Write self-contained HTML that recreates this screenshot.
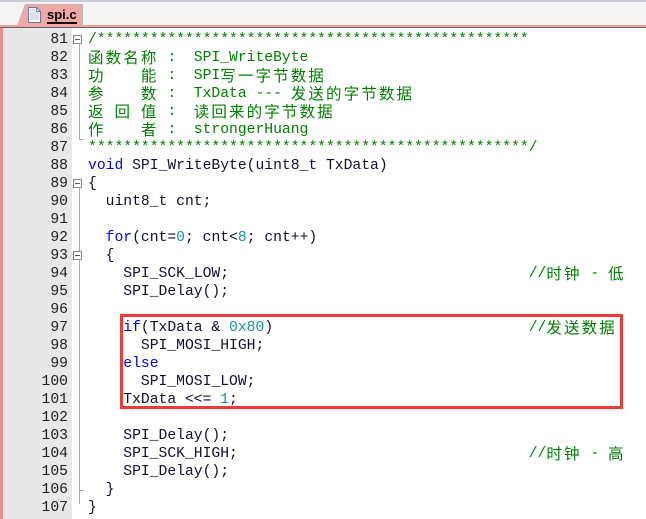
<!DOCTYPE html>
<html><head><meta charset="utf-8"><style>
body{margin:0;width:646px;height:519px;overflow:hidden;background:#fff;position:relative;font-family:"Liberation Mono","Noto Sans CJK SC",monospace;}
.top{position:absolute;left:0;top:0;width:646px;height:25px;background:#f4f4f4;border-top:2px solid #c8ccd8;box-sizing:border-box}
.pl{position:absolute;left:0;top:25px;width:646px;height:2px;background:#f0a0a0}
.dl{position:absolute;left:0;top:27px;width:646px;height:1px;background:#666}
.tab{position:absolute;left:18px;top:5px;width:64px;height:21px;background:#f3a6a6;clip-path:polygon(7px 0,100% 0,100% 100%,0 100%);}
.tabb{position:absolute;left:17px;top:4px;width:66px;height:22px;background:#b8b8b8;clip-path:polygon(8px 0,100% 0,100% 100%,0 100%);}
.tabt{position:absolute;left:47px;top:7px;font:bold 13px "Liberation Sans",sans-serif;color:#000;border-bottom:2px solid #000;line-height:15px}
.lb{position:absolute;left:0;top:28px;width:3px;height:491px;background:#e89090}
.gut{position:absolute;left:3px;top:28px;width:69px;height:491px;background:#e8e8e8}
.vl{position:absolute;left:79px;top:28px;width:1px;height:491px;background:#aaa}
.box{position:absolute;left:73px;width:9px;height:9px;border:1px solid #888;background:#fff;box-sizing:border-box}
.box:after{content:"";position:absolute;left:1px;top:3px;width:5px;height:1px;background:#555}
.nums{position:absolute;left:3px;top:31px;width:65px;text-align:right;font-size:14.7px;line-height:18px;color:#202020}
pre{position:absolute;left:88px;top:31px;margin:0;font-size:14.7px;line-height:18px;color:#101030;font-family:"Liberation Mono","Noto Sans CJK SC",monospace}
.c{color:#008000}.k{color:#0000ff}.n{color:#1a90a0}
i{font-style:normal;display:inline-block;width:17.64px;font-family:"Noto Sans CJK SC",sans-serif;font-size:15.5px;line-height:18px;vertical-align:top;margin-top:-1px;overflow:visible;white-space:nowrap}
.rb{position:absolute;left:120px;top:314px;width:503px;height:95px;border:3px solid #f03a3a;box-sizing:border-box}
</style></head><body>
<div class="top"></div><div class="pl"></div><div class="dl"></div>
<div class="tabb"></div><div class="tab"></div>
<svg style="position:absolute;left:28px;top:7px" width="13" height="16"><path d="M0.5 0.5H8.5L12.5 4.5V15.5H0.5Z" fill="#f4f4f4" stroke="#6a7a9a"/><path d="M8.5 0.5V4.5H12.5" fill="none" stroke="#6a7a9a"/><path d="M2 3h5M2 6h9M2 8h9M2 10h9M2 12h9" stroke="#c8c8d8"/></svg>
<div class="tabt">spi.c</div>
<div class="lb"></div><div class="gut"></div><div class="vl" style="top:40px;height:100px"></div><div class="vl" style="top:184px;height:320px"></div>
<div style="position:absolute;left:79px;top:139px;width:5px;height:1px;background:#aaa"></div>
<div style="position:absolute;left:79px;top:490px;width:5px;height:1px;background:#aaa"></div>
<div class="box" style="top:35px"></div><div class="box" style="top:179px"></div><div class="box" style="top:251px"></div>
<div class="nums">81<br>82<br>83<br>84<br>85<br>86<br>87<br>88<br>89<br>90<br>91<br>92<br>93<br>94<br>95<br>96<br>97<br>98<br>99<br>100<br>101<br>102<br>103<br>104<br>105<br>106<br>107</div>
<pre><span class="c">/*************************************************
<i>函</i><i>数</i><i>名</i><i>称</i> :  SPI_WriteByte
<i>功</i>    <i>能</i> :  SPI<i>写</i><i>一</i><i>字</i><i>节</i><i>数</i><i>据</i>
<i>参</i>    <i>数</i> :  TxData --- <i>发</i><i>送</i><i>的</i><i>字</i><i>节</i><i>数</i><i>据</i>
<i>返</i> <i>回</i> <i>值</i> :  <i>读</i><i>回</i><i>来</i><i>的</i><i>字</i><i>节</i><i>数</i><i>据</i>
<i>作</i>    <i>者</i> :  strongerHuang
**************************************************/</span>
<span class="k">void</span> SPI_WriteByte(uint8_t TxData)
{
  uint8_t cnt;

  <span class="k">for</span>(cnt=<span class="n">0</span>; cnt&lt;<span class="n">8</span>; cnt++)
  {
    SPI_SCK_LOW;                                  <span class="c">//<i>时</i><i>钟</i> - <i>低</i></span>
    SPI_Delay();

    <span class="k">if</span>(TxData &amp; <span class="n">0x80</span>)                             <span class="c">//<i>发</i><i>送</i><i>数</i><i>据</i></span>
      SPI_MOSI_HIGH;
    <span class="k">else</span>
      SPI_MOSI_LOW;
    TxData &lt;&lt;= <span class="n">1</span>;

    SPI_Delay();
    SPI_SCK_HIGH;                                 <span class="c">//<i>时</i><i>钟</i> - <i>高</i></span>
    SPI_Delay();
  }
}</pre>
<div class="rb"></div>
</body></html>
